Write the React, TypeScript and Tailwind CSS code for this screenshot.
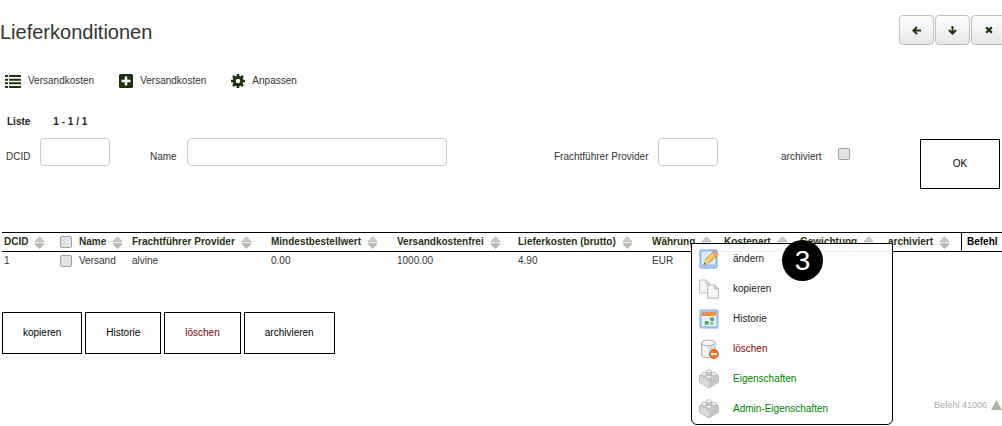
import type { ReactNode } from "react";
import { FaPlusSquare } from "react-icons/fa";

// Lieferkonditionen - list view with context menu

// column headers of the list, the checkbox column has no title
const columns = [
    { title: "DCID", width: "w-[56px]" },
    { title: "", width: "w-[19px]" },
    { title: "Name", width: "w-[53px]" },
    { title: "Frachtführer Provider", width: "w-[139px]" },
    { title: "Mindestbestellwert", width: "w-[126px]" },
    { title: "Versandkostenfrei", width: "w-[121px]" },
    { title: "Lieferkosten (brutto)", width: "w-[134px]" },
    { title: "Währung", width: "w-[72px]" },
    { title: "Kostenart", width: "w-[76px]" },
    { title: "Gewichtung", width: "w-[88px]" },
    { title: "archiviert", width: "w-[75px]" },
];

const row = ["1", "", "Versand", "alvine", "0.00", "1000.00", "4.90", "EUR", "", "", ""];

function ListIcon() {
    return (
        <svg width="16" height="13" viewBox="0 0 16 13" fill="#1f330f" aria-hidden="true">
            <path d="M0 0h3v2H0zM4 0h12v2H4zM0 3.7h3v2H0zM4 3.7h12v2H4zM0 7.3h3v2H0zM4 7.3h12v2H4zM0 11h3v2H0zM4 11h12v2H4z" />
        </svg>
    );
}

function GearIcon() {
    return (
        <svg width="14" height="14" viewBox="0 0 14 14" stroke="#1f330f" fill="none" aria-hidden="true">
            <circle cx="7" cy="7" r="3.8" strokeWidth="3" />
            <path d="M7 0v3M7 11v3M0 7h3M11 7h3M2 2l2 2M10 10l2 2M2 12l2-2M10 4l2-2" strokeWidth="2.6" />
        </svg>
    );
}

function ArrowLeftIcon() {
    return (
        <svg width="9" height="9" viewBox="0 0 9 9" fill="none" stroke="#1f330f" strokeWidth="2" aria-hidden="true">
            <path d="M9 4.5H2M5 .9 1.4 4.5 5 8.1" />
        </svg>
    );
}

function ArrowDownIcon() {
    return (
        <svg width="9" height="9" viewBox="0 0 9 9" fill="none" stroke="#1f330f" strokeWidth="2" aria-hidden="true">
            <path d="M4.5 0v7M.9 4 4.5 7.6 8.1 4" />
        </svg>
    );
}

function CrossIcon() {
    return (
        <svg width="8" height="8" viewBox="0 0 8 8" aria-hidden="true">
            <path d="M1.2 1.2 6.8 6.8M6.8 1.2 1.2 6.8" stroke="#1f330f" strokeWidth="2.3" />
        </svg>
    );
}

function SortIcon() {
    return (
        <svg className="shrink-0" width="11" height="13" viewBox="0 0 11 13" aria-hidden="true">
            <path d="M5.5 .8 10 5.7H1z" fill="#cdcdc5" stroke="#a8a8a0" strokeWidth=".8" />
            <path d="M5.5 12.6 10 7.7H1z" fill="#bdbdb5" stroke="#a8a8a0" strokeWidth=".8" />
        </svg>
    );
}

function EditIcon() {
    return (
        <svg width="20" height="20" viewBox="0 0 20 20" aria-hidden="true">
            <rect x="1" y="1" width="17" height="18" rx="1" fill="#b9d6f5" stroke="#6f9fdb" />
            <rect x="3" y="3" width="13" height="14" fill="#dcebfb" />
            <path d="M3 15.5h13V17H3z" fill="#8db6e6" />
            <path d="M5 15.5 6.5 10.5 14.5 2.5 18.5 6.5 10 14z" fill="#f5bd45" stroke="#b98334" strokeWidth=".7" />
            <path d="M8 11.5 16 4" stroke="#fde28f" strokeWidth="1.6" />
            <path d="M13 4 14.8 2.2Q16 1.3 17.8 3.2T18.8 6.2L17 8z" fill="#eda68d" stroke="#b97b65" strokeWidth=".5" />
            <path d="M5 15.5 6.3 11 9.6 14.2z" fill="#f4dfba" />
            <path d="M5 15.5 5.6 13.3 7.2 14.9z" fill="#555" />
        </svg>
    );
}

function CopyIcon() {
    return (
        <svg width="20" height="20" viewBox="0 0 20 20" aria-hidden="true">
            <path d="M.6 1h6.5l3.3 3.3V14H.6z" fill="#f7f7f7" stroke="#bdbdbd" />
            <path d="M7 1v3.4h3.4" fill="#ddd" stroke="#bdbdbd" />
            <path d="M8.6 6h7.2l3.6 3.6V19.2H8.6z" fill="#f5f5f5" stroke="#b5b5b5" />
            <path d="M15.6 6v3.8h3.8" fill="#ddd" stroke="#b5b5b5" />
        </svg>
    );
}

function HistoryIcon() {
    return (
        <svg width="20" height="20" viewBox="0 0 20 20" aria-hidden="true">
            <rect x="1" y="1" width="18" height="18" rx="1" fill="#a9caf0" stroke="#8db3e2" />
            <rect x="3" y="3" width="14" height="14" fill="#f5f8fc" />
            <path d="M3 3h14v4H3z" fill="#f08a4b" />
            <path d="M3 10.3h14M3 13.7h14M6.5 7v10M10 7v10M13.5 7v10" stroke="#d3dce8" strokeWidth=".7" />
            <path d="M11.2 8.3h4v3.6h-4zM5.8 12h3.8v3.7H5.8z" fill="#56a968" />
            <path d="M11.2 12.8h3.4v3h-3.4z" fill="#84c294" />
        </svg>
    );
}

function DeleteIcon() {
    return (
        <svg width="20" height="20" viewBox="0 0 20 20" aria-hidden="true">
            <path d="M2.5 4v12c0 3.7 13.5 3.7 13.5 0V4" fill="#e6e6e6" stroke="#b0b0b0" />
            <path d="M5 7v10M7.5 8v10" stroke="#fff" strokeWidth="1.3" />
            <path d="M12.5 7.5v9" stroke="#cdcdcd" strokeWidth="1.8" />
            <ellipse cx="9.25" cy="3.9" rx="6.75" ry="2.8" fill="#f6f6f6" stroke="#b0b0b0" />
            <circle cx="15" cy="15" r="4.4" fill="#ee7a2c" stroke="#cc5310" />
            <path d="M12.2 14h5.6v2h-5.6z" fill="#fff" />
        </svg>
    );
}

function BrickIcon() {
    return (
        <svg width="20" height="20" viewBox="0 0 20 20" aria-hidden="true">
            <path d="M.5 6.8 10 2l9.5 4.8v6.4L9.8 19 .5 13.3z" fill="#e2e2e2" stroke="#b5b5b5" />
            <path d="M.8 7 9.8 11.8V18.5L.8 13z" fill="#dadada" />
            <path d="M9.8 11.8 19.2 7v6L9.8 18.5z" fill="#c6c6c6" />
            <g fill="#d0d0d0" stroke="#adadad" strokeWidth=".7">
                <path d="M7.2 2.3v2c0 1.9 5.4 1.9 5.4 0v-2M2.4 5v2c0 1.9 5.4 1.9 5.4 0V5M12.2 5v2c0 1.9 5.4 1.9 5.4 0V5M7.2 7.8v2c0 1.9 5.4 1.9 5.4 0v-2" />
            </g>
            <g fill="#f4f4f4" stroke="#b0b0b0" strokeWidth=".7">
                <ellipse cx="9.9" cy="2.2" rx="2.7" ry="1.5" />
                <ellipse cx="5.1" cy="4.9" rx="2.7" ry="1.5" />
                <ellipse cx="14.9" cy="4.9" rx="2.7" ry="1.5" />
                <ellipse cx="9.9" cy="7.7" rx="2.7" ry="1.5" />
            </g>
        </svg>
    );
}

function HeadButton({ label, children }: { label: string; children: ReactNode }) {
    return (
        <button
            aria-label={label}
            className="flex h-[30px] w-[35px] items-center justify-center rounded border border-[#c0c0c0] bg-linear-to-b from-white to-[#e6e6e6]"
        >
            {children}
        </button>
    );
}

function Tick({ label, id }: { label?: string; id?: string }) {
    return (
        <input
            type="checkbox"
            id={id}
            aria-label={label}
            className="block size-3 shrink-0 appearance-none rounded-xs border border-[#a0a0a0] bg-[#e2e2e2]"
        />
    );
}

function Field({ id, label, width }: { id: string; label: string; width: string }) {
    return (
        <div className="flex items-center gap-[10px]">
            <label htmlFor={id} className="mt-[10px] whitespace-nowrap">{label}</label>
            <input id={id} type="text" className={`h-7 rounded border border-[#ccc] bg-white px-2 ${width}`} />
        </div>
    );
}

function MenuItem({ icon, label, color }: { icon: ReactNode; label: string; color: string }) {
    return (
        <li>
            <a href="#" className={`flex h-[30px] items-center gap-[14px] pl-[7px] ${color}`}>
                {icon}
                {label}
            </a>
        </li>
    );
}

function ContextMenu() {
    return (
        <div className="absolute left-[691px] top-[11px] w-[202px] rounded-b-md border border-black bg-white/95">
            <ul>
                <MenuItem icon={<EditIcon />} label="ändern" color="text-[#222]" />
                <MenuItem icon={<CopyIcon />} label="kopieren" color="text-[#222]" />
                <MenuItem icon={<HistoryIcon />} label="Historie" color="text-[#222]" />
                <MenuItem icon={<DeleteIcon />} label="löschen" color="text-[#900000]" />
                <MenuItem icon={<BrickIcon />} label="Eigenschaften" color="text-[#008000]" />
                <MenuItem icon={<BrickIcon />} label="Admin-Eigenschaften" color="text-[#008000]" />
            </ul>
            {/* step marker */}
            <span className="absolute left-[90px] -top-1 flex size-[41px] items-center justify-center rounded-full bg-black text-[28px] text-white">
                3
            </span>
        </div>
    );
}

export default function App() {
    return (
        <div className="overflow-x-hidden bg-white font-['Liberation_Sans',Arial,sans-serif] text-[10px] leading-[14px] text-[#333]">
            {/* Title and window buttons */}
            <header className="flex h-[60px] items-center justify-between">
                <h1 className="mt-1 text-[20px] leading-6">Lieferkonditionen</h1>
                <div className="-mr-1 flex gap-px">
                    <HeadButton label="zurück"><ArrowLeftIcon /></HeadButton>
                    <HeadButton label="nach unten"><ArrowDownIcon /></HeadButton>
                    <HeadButton label="schließen"><CrossIcon /></HeadButton>
                </div>
            </header>

            {/* Toolbar */}
            <nav className="flex h-[42px] items-center gap-[25px] pl-[5px]">
                <a href="#" className="flex items-center gap-[7px]">
                    <ListIcon />
                    Versandkosten
                </a>
                <a href="#" className="flex items-center gap-[7px]">
                    <FaPlusSquare className="h-4 w-[14px] text-[#1f330f]" />
                    Versandkosten
                </a>
                <a href="#" className="flex items-center gap-[7px]">
                    <GearIcon />
                    Anpassen
                </a>
            </nav>

            <div className="mt-[13px] flex gap-[23px] pl-[7px] font-bold text-[#222]">
                <span>Liste</span>
                <span>1 - 1 / 1</span>
            </div>

            {/* Filter */}
            <form className="mt-[9px] grid grid-cols-[144fr_404fr_227fr_139fr_80px] items-start pl-[6px] pr-[2px]">
                <Field id="dcid" label="DCID" width="w-[70px]" />
                <Field id="name" label="Name" width="w-[260px]" />
                <Field id="provider" label="Frachtführer Provider" width="w-[60px]" />
                <div className="flex h-8 items-center gap-4">
                    <label htmlFor="archived" className="mt-[6px]">archiviert</label>
                    <Tick id="archived" />
                </div>
                <button type="button" className="mt-px h-[50px] border border-black text-black">OK</button>
            </form>

            {/* Result list */}
            <div className="relative mt-[43px] pl-[2px]">
                <table className="w-full table-fixed border-separate border-spacing-0 text-left">
                    <thead className="text-[#1f330f]">
                        <tr>
                            {columns.map((col, i) => (
                                <th key={i} className={`h-5 border-y border-black px-[2px] py-0 ${col.width}`}>
                                    {col.title ? (
                                        <span className="flex items-center gap-[6px] whitespace-nowrap">
                                            {col.title}
                                            <SortIcon />
                                        </span>
                                    ) : (
                                        <Tick label="alle auswählen" />
                                    )}
                                </th>
                            ))}
                            <th className="border-y border-l border-black px-[5px] py-0 text-black">Befehl</th>
                        </tr>
                    </thead>
                    <tbody>
                        <tr>
                            {row.map((cell, i) => (
                                <td key={i} className="h-[18px] px-[2px] py-0">
                                    {i === 1 ? <Tick label="Versand auswählen" /> : cell}
                                </td>
                            ))}
                            <td />
                        </tr>
                    </tbody>
                </table>
                <ContextMenu />
            </div>

            {/* Actions for the selected rows */}
            <div className="mt-[42px] flex gap-[3px] pl-[2px]">
                <button className="h-[42px] border border-black px-5 text-black">kopieren</button>
                <button className="h-[42px] border border-black px-5 text-black">Historie</button>
                <button className="h-[42px] border border-black px-5 text-[#800000]">löschen</button>
                <button className="h-[42px] border border-black px-5 text-black">archivieren</button>
            </div>

            <footer className="mt-11 flex h-7 items-start justify-end gap-1 text-[9px] text-[#aaa]">
                Befehl 41006
                <svg className="mt-[2px]" width="11" height="10" viewBox="0 0 11 10" aria-hidden="true">
                    <path d="M5.5 0 11 10H0z" fill="#b0b0a5" />
                </svg>
            </footer>
        </div>
    );
}
